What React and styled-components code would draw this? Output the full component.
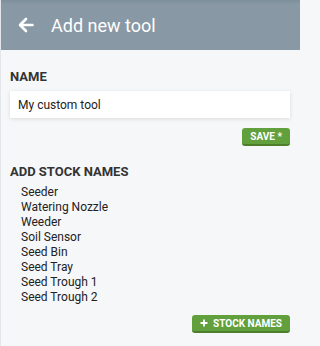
import React from 'react';
import styled, { createGlobalStyle } from 'styled-components';

const GlobalStyle = createGlobalStyle`
  html, body {
    margin: 0;
    padding: 0;
    background: #f6f7f9;
    font-family: Roboto, "Liberation Sans", sans-serif;
  }
`;

const Page = styled.div`
  width: 300px;
  height: 346px;
  background: #f6f7f9;
  border-left: 1px solid #e4e6e9;
  box-sizing: border-box;
`;

const Header = styled.header`
  height: 50px;
  background: linear-gradient(180deg, #7d8e9b 0px, #8898a5 4px, #8898a5 100%);
  display: flex;
  align-items: center;
  padding-left: 17px;
  gap: 17px;
  color: #fff;
`;

const BackIcon = styled.svg`
  width: 16px;
  height: 16px;
`;

const Title = styled.h1`
  margin: 0;
  font-size: 18px;
  font-weight: 400;
`;

const Content = styled.div`
  padding: 19px 10px 0 9px;
`;

const Label = styled.h3`
  margin: 0 0 ${(p) => p.$gap || 7}px 0;
  font-size: 13px;
  line-height: 15px;
  font-weight: 700;
  color: #333;
`;

const Input = styled.input`
  display: block;
  width: 100%;
  box-sizing: border-box;
  height: 27px;
  border: none;
  outline: none;
  background: #fff;
  box-shadow: 0 1px 4px rgba(0, 0, 0, 0.12);
  padding: 0 8px;
  font-family: inherit;
  font-size: 12px;
  color: #222;
`;

const Actions = styled.div`
  display: flex;
  justify-content: flex-end;
  margin-top: ${(p) => p.$top || 10}px;
`;

const Button = styled.button`
  display: flex;
  align-items: center;
  gap: 5px;
  height: 18px;
  padding: 0 8px;
  border: none;
  border-bottom: 2px solid #4c7e2c;
  border-radius: 3px;
  background: #62a03d;
  color: #fff;
  font-family: inherit;
  font-size: 10px;
  font-weight: 700;
  box-sizing: border-box;
  cursor: pointer;
`;

const Section = styled.div`
  margin-top: ${(p) => p.$top || 0}px;
`;

const List = styled.ul`
  list-style: none;
  margin: 0;
  padding: 0 0 0 11px;
`;

const Item = styled.li`
  font-size: 12px;
  line-height: 15px;
  color: #222;
`;

const stockNames = [
  'Seeder',
  'Watering Nozzle',
  'Weeder',
  'Soil Sensor',
  'Seed Bin',
  'Seed Tray',
  'Seed Trough 1',
  'Seed Trough 2',
];

export default function App() {
  return (
    <>
      <GlobalStyle />
      <Page>
        <Header>
          <BackIcon viewBox="0 0 16 16">
            <path d="M8 2 L2 8 L8 14 M2.5 8 H14.5" fill="none" stroke="#fff" strokeWidth="2.6" strokeLinejoin="round" strokeLinecap="round" />
          </BackIcon>
          <Title>Add new tool</Title>
        </Header>
        <Content>
          <Label>NAME</Label>
          <Input defaultValue="My custom tool" />
          <Actions $top={10}>
            <Button>SAVE *</Button>
          </Actions>
          <Section $top={18}>
            <Label $gap={6}>ADD STOCK NAMES</Label>
            <List>
              {stockNames.map((n) => (
                <Item key={n}>{n}</Item>
              ))}
            </List>
          </Section>
          <Actions $top={10}>
            <Button>
              <svg width="8" height="8" viewBox="0 0 8 8">
                <path d="M4 0.5 V7.5 M0.5 4 H7.5" stroke="#fff" strokeWidth="1.8" />
              </svg>
              STOCK NAMES
            </Button>
          </Actions>
        </Content>
      </Page>
    </>
  );
}
